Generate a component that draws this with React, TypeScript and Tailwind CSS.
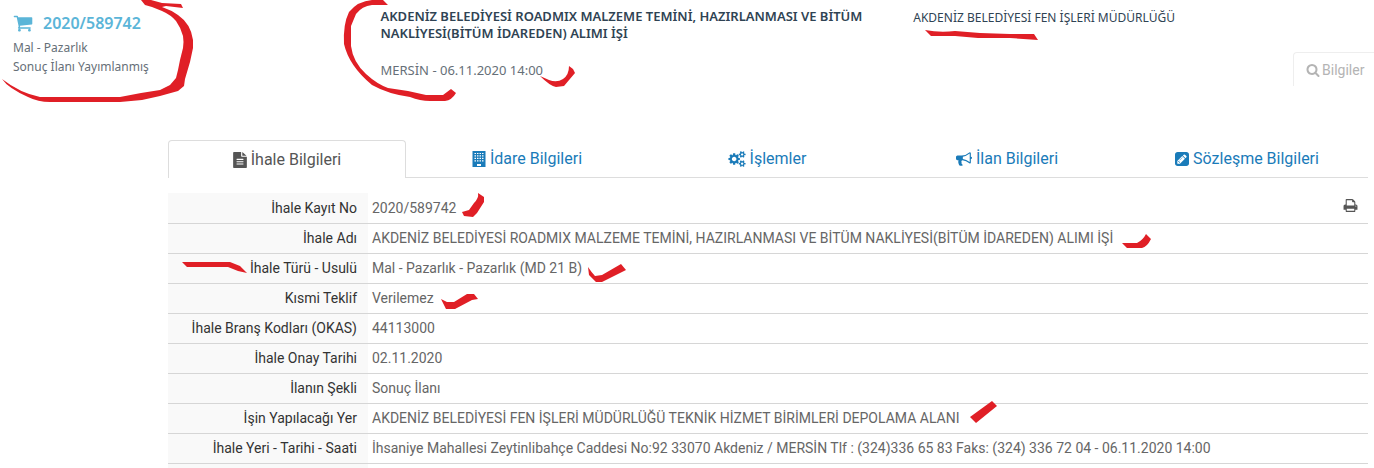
import React from "react";

interface IconProps {
    path: string;
    viewBox?: string;
    className?: string;
}

function Icon({ path, viewBox = "0 0 1792 1792", className = "" }: IconProps) {
    return (
        <svg viewBox={viewBox} fill="currentColor" fillRule="evenodd" aria-hidden="true" className={`shrink-0 ${className}`}>
            <path d={path} />
        </svg>
    );
}

const icons = {
    cart: "M704 1536q0 52-38 90t-90 38-90-38-38-90 38-90 90-38 90 38 38 90zm896 0q0 52-38 90t-90 38-90-38-38-90 38-90 90-38 90 38 38 90zm128-1088v512q0 24-16.5 42.5t-40.5 21.5l-1044 122q13 60 13 70 0 16-24 64h920q26 0 45 19t19 45-19 45-45 19h-1024q-26 0-45-19t-19-45q0-11 8-31.5t16-36 21.5-40 15.5-29.5l-177-823h-204q-26 0-45-19t-19-45 19-45 45-19h256q16 0 28.5 6.5t19.5 15.5 13 24.5 8 26 5.5 29.5 4.5 26h1201q26 0 45 19t19 45z",
    search: "M1216 832q0-185-131.5-316.5t-316.5-131.5-316.5 131.5-131.5 316.5 131.5 316.5 316.5 131.5 316.5-131.5 131.5-316.5zm512 832q0 52-38 90t-90 38q-54 0-90-38l-343-342q-179 124-399 124-143 0-273.5-55.5t-225-150-150-225-55.5-273.5 55.5-273.5 150-225 225-150 273.5-55.5 273.5 55.5 225 150 150 225 55.5 273.5q0 220-124 399l343 343q37 37 37 90z",
    file: "M1468 380q14 14 28 36h-472v-416q22 14 36 28zm-476 164h544v1152q0 40-28 68t-68 28h-1344q-40 0-68-28t-28-68v-1600q0-40 28-68t68-28h800v448q0 40 28 68t68 28zm160 832v-64q0-14-9-23t-23-9h-704q-14 0-23 9t-9 23v64q0 14 9 23t23 9h704q14 0 23-9t9-23zm0-256v-64q0-14-9-23t-23-9h-704q-14 0-23 9t-9 23v64q0 14 9 23t23 9h704q14 0 23-9t9-23zm0-256v-64q0-14-9-23t-23-9h-704q-14 0-23 9t-9 23v64q0 14 9 23t23 9h704q14 0 23-9t9-23z",
    building: "M0 0H13V16H0ZM2 2v1h1.5v-1zM4.5 2v1h1.5v-1zM7 2v1h1.5v-1zM9.5 2v1h1.5v-1zM2 4.3v1.3h1.5v-1.3zM4.5 4.3v1.3h1.5v-1.3zM7 4.3v1.3h1.5v-1.3zM9.5 4.3v1.3h1.5v-1.3zM2 6.8v1.3h1.5v-1.3zM4.5 6.8v1.3h1.5v-1.3zM7 6.8v1.3h1.5v-1.3zM9.5 6.8v1.3h1.5v-1.3zM2 9.3v1.3h1.5v-1.3zM4.5 9.3v1.3h1.5v-1.3zM7 9.3v1.3h1.5v-1.3zM9.5 9.3v1.3h1.5v-1.3zM4.5 13v2h4v-2z",
    cogs: "M896 896q0-106-75-181t-181-75-181 75-75 181 75 181 181 75 181-75 75-181zm768 512q0-52-38-90t-90-38-90 38-38 90q0 53 37.5 90.5t90.5 37.5 90.5-37.5 37.5-90.5zm0-1024q0-52-38-90t-90-38-90 38-38 90q0 53 37.5 90.5t90.5 37.5 90.5-37.5 37.5-90.5zm-384 421v185q0 10-7 19.5t-16 10.5l-155 24q-11 35-32 76 34 48 90 115 7 11 7 20 0 12-7 19-23 30-82.5 89.5t-78.5 59.5q-11 0-21-7l-115-90q-37 19-77 31-11 108-23 155-7 24-30 24h-186q-11 0-20-7.5t-10-17.5l-23-153q-34-10-75-31l-118 89q-7 7-20 7-11 0-21-8-144-133-144-160 0-9 7-19 10-14 41-53t47-61q-23-44-35-82l-152-24q-10-1-17-9.5t-7-19.5v-185q0-10 7-19.5t16-10.5l155-24q11-35 32-76-34-48-90-115-7-11-7-20 0-12 7-20 22-30 82-89t79-59q11 0 21 7l115 90q34-18 77-32 11-108 23-154 7-24 30-24h186q11 0 20 7.5t10 17.5l23 153q34 10 75 31l118-89q8-7 20-7 11 0 21 8 144 133 144 160 0 8-7 19-12 16-42 54t-45 60q23 48 34 82l152 23q10 2 17 10.5t7 19.5zm640 533v140q0 16-149 31-12 27-30 52 51 113 51 138 0 4-4 7-122 71-124 71-8 0-46-47t-52-68q-20 2-30 2t-30-2q-14 21-52 68t-46 47q-2 0-124-71-4-3-4-7 0-25 51-138-18-25-30-52-149-15-149-31v-140q0-16 149-31 13-29 30-52-51-113-51-138 0-4 4-7 4-2 35-20t59-34 30-16q8 0 46 46.5t52 67.5q20-2 30-2t30 2q51-71 92-112l6-2q4 0 124 70 4 3 4 7 0 25-51 138 17 23 30 52 149 15 149 31zm0-1024v140q0 16-149 31-12 27-30 52 51 113 51 138 0 4-4 7-122 71-124 71-8 0-46-47t-52-68q-20 2-30 2t-30-2q-14 21-52 68t-46 47q-2 0-124-71-4-3-4-7 0-25 51-138-18-25-30-52-149-15-149-31v-140q0-16 149-31 13-29 30-52-51-113-51-138 0-4 4-7 4-2 35-20t59-34 30-16q8 0 46 46.5t52 67.5q20-2 30-2t30 2q51-71 92-112l6-2q4 0 124 70 4 3 4 7 0 25-51 138 17 23 30 52 149 15 149 31z",
    bullhorn: "M1664 640q53 0 90.5 37.5t37.5 90.5-37.5 90.5-90.5 37.5v384q0 52-38 90t-90 38q-417-347-812-380-58 19-91 66t-31 100.5 40 92.5q-20 33-23 65.5t6 58 33.5 55 48 50 61.5 50.5q-29 58-111.5 83t-168.5 11.5-132-55.5q-7-23-29.5-87.5t-32-94.5-23-89-15-101 3.5-98.5 22-110.5h-122q-66 0-113-47t-47-113v-192q0-66 47-113t113-47h480q435 0 896-384 52 0 90 38t38 90v384zm-128 604v-954q-394 302-768 343v270q377 42 768 341z",
    pencil: "M532 1108l152 152-52 52h-56v-96h-96v-56l52-52zm414-390q14 13-3 30l-291 291q-17 17-30 3-14-13 3-30l291-291q17-17 30-3zm-274 690l544-544-288-288-544 544v288h288zm608-608l92-92q28-28 28-68t-28-68l-152-152q-28-28-68-28t-68 28l-92 92zm384-384v960q0 119-84.5 203.5t-203.5 84.5h-960q-119 0-203.5-84.5t-84.5-203.5v-960q0-119 84.5-203.5t203.5-84.5h960q119 0 203.5 84.5t84.5 203.5z",
    print: "M448 1536h896v-256h-896v256zm0-640h896v-384h-160q-40 0-68-28t-28-68v-160h-640v640zm1152 64q0-26-19-45t-45-19-45 19-19 45 19 45 45 19 45-19 19-45zm128 0v416q0 13-9.5 22.5t-22.5 9.5h-224v160q0 40-28 68t-68 28h-960q-40 0-68-28t-28-68v-160h-224q-13 0-22.5-9.5t-9.5-22.5v-416q0-79 56.5-135.5t135.5-56.5h64v-544q0-40 28-68t68-28h672q40 0 88 20t76 48l152 152q28 28 48 76t20 88v256h64q79 0 135.5 56.5t56.5 135.5z",
};

const tabs = [
    { label: "İhale Bilgileri", icon: <Icon path={icons.file} viewBox="0 0 1536 1792" className="h-4 w-3.5" /> },
    { label: "İdare Bilgileri", icon: <Icon path={icons.building} viewBox="0 0 13 16" className="h-4 w-3.5" /> },
    { label: "İşlemler", icon: <Icon path={icons.cogs} viewBox="0 0 1920 1792" className="h-4 w-[18px]" /> },
    { label: "İlan Bilgileri", icon: <Icon path={icons.bullhorn} className="size-4" /> },
    { label: "Sözleşme Bilgileri", icon: <Icon path={icons.pencil} viewBox="128 128 1536 1536" className="size-3.5" /> },
];

const rows = [
    ["İhale Kayıt No", "2020/589742"],
    ["İhale Adı", "AKDENİZ BELEDİYESİ ROADMIX MALZEME TEMİNİ, HAZIRLANMASI VE BİTÜM NAKLİYESİ(BİTÜM İDAREDEN) ALIMI İŞİ"],
    ["İhale Türü - Usulü", "Mal - Pazarlık - Pazarlık (MD 21 B)"],
    ["Kısmi Teklif", "Verilemez"],
    ["İhale Branş Kodları (OKAS)", "44113000"],
    ["İhale Onay Tarihi", "02.11.2020"],
    ["İlanın Şekli", "Sonuç İlanı"],
    ["İşin Yapılacağı Yer", "AKDENİZ BELEDİYESİ FEN İŞLERİ MÜDÜRLÜĞÜ TEKNİK HİZMET BİRİMLERİ DEPOLAMA ALANI"],
    ["İhale Yeri - Tarihi - Saati", "İhsaniye Mahallesi Zeytinlibahçe Caddesi No:92 33070 Akdeniz / MERSİN Tlf : (324)336 65 83 Faks: (324) 336 72 04 - 06.11.2020 14:00"],
];

// Red pen strokes drawn over the page
const marks = [
    "M141 0L145 5L152 7L162 11Q171 15 176 21Q181 28 183 36Q184 42 183 48L180 60L178 70L176 78L170 85L160 90L141 93L120 97H40Q20 93 2 79Q8 88 28 97Q38 102 50 102H120L142 100L160 96L178 91L184 86L185 79L190 62L193 48V40Q191 24 178 15Q171 10 162 7L166 6L183 8L181 4L162 3L151 0Z",
    "M388 5L383 0H372Q358 1 349 12Q343 24 344 44Q349 66 372 85Q388 94 410 97Q420 101 430 101H445Q452 100 456 93L451 89L443 95H426L408 91L388 88Q377 84 366 74Q353 62 351 46V26L356 14Q362 6 372 5Z",
    "M540 76Q550 86 556 87L564 86L575 73L573 69L569 66Q569 75 563 79Q557 83 549 80Z",
    "M925 30Q940 33 955 31L980 33L1010 34H1034L1038 40L1010 38H978L955 36H931Z",
    "M478 193L484 197V202L477 213L473 217L464 216L462 212L469 210L474 203Q479 198 478 193Z",
    "M1122 243H1137Q1143 240 1146 234L1151 239Q1147 247 1142 248H1127Z",
    "M182 262H230L240 266L247 273L238 271L228 267H187Z",
    "M588 267Q592 273 595 276L602 275L621 264L626 270L602 282H596L589 275Z",
    "M441 299L447 302L454 302L467 294H474L478 299L472 300L455 309H446Z",
    "M970 417L992 401L997 406L976 423Z",
];

function Header() {
    return (
        <header className="grid h-[140px] grid-cols-[27%_39%_1fr] pl-[13px] pt-2 font-['Noto_Sans','Open_Sans',sans-serif] text-[#2f4353]">
            <div className="text-xs leading-[19px] text-[#666f78]">
                <div className="flex h-[30px] items-center gap-2.5 text-[#5bb5d8]">
                    <Icon path={icons.cart} className="size-5" />
                    <a href="#ihale" className="text-base font-semibold">2020/589742</a>
                </div>
                <p>Mal - Pazarlık</p>
                <p>Sonuç İlanı Yayımlanmış</p>
            </div>
            <div>
                <h1 className="max-w-[500px] text-[13px] font-semibold leading-[17px]">
                    AKDENİZ BELEDİYESİ ROADMIX MALZEME TEMİNİ, HAZIRLANMASI VE BİTÜM NAKLİYESİ(BİTÜM İDAREDEN) ALIMI İŞİ
                </h1>
                <p className="mt-5 text-[13px] leading-[17px] text-[#666f78]">MERSİN - 06.11.2020 14:00</p>
            </div>
            <div className="flex flex-col">
                <p className="pl-0.5 text-xs leading-5">AKDENİZ BELEDİYESİ FEN İŞLERİ MÜDÜRLÜĞÜ</p>
                <button
                    type="button"
                    className="mt-6 flex h-[34px] w-[81px] items-center gap-0.5 self-end whitespace-nowrap rounded-tl border-l border-t border-[#eeeeee] pl-3 font-[Roboto,sans-serif] text-sm text-[#b4b4b4]"
                >
                    <Icon path={icons.search} className="size-3.5" />
                    Bilgiler
                </button>
            </div>
        </header>
    );
}

export default function App() {
    return (
        <div className="relative bg-white font-[Roboto,sans-serif] text-[#666666]">
            <Header />
            <main className="ml-[168px] mr-1.5">
                <div role="tablist" className="grid h-[38px] grid-cols-5 border-b border-[#dddddd]">
                    {tabs.map((tab, i) => (
                        <button
                            key={tab.label}
                            type="button"
                            role="tab"
                            aria-selected={i === 0}
                            className={`mr-0.5 flex items-center justify-center gap-1 text-base ${
                                i === 0
                                    ? "-mb-px rounded-t border border-b-0 border-[#dddddd] bg-white text-[#555555]"
                                    : "text-[#1a7bb9]"
                            }`}
                        >
                            {tab.icon}
                            {tab.label}
                        </button>
                    ))}
                </div>
                <table className="mt-[15px] w-full table-fixed border-collapse text-sm">
                    <tbody>
                        {rows.map(([label, value], i) => (
                            <tr key={label} className="h-[30px] border-b border-[#d6d6d6]">
                                <th scope="row" className="w-[200px] bg-[#f9f9f9] pr-[11px] text-right font-normal text-[#333333]">
                                    {label}
                                </th>
                                <td className="pl-1 pr-2.5">
                                    <div className="flex items-center justify-between">
                                        {value}
                                        {i === 0 && (
                                            <button type="button" aria-label="Yazdır" className="pb-1 text-[#555555]">
                                                <Icon path={icons.print} className="size-[15px]" />
                                            </button>
                                        )}
                                    </div>
                                </td>
                            </tr>
                        ))}
                    </tbody>
                </table>
                <div className="h-[5px] w-[200px] bg-[#f9f9f9]" />
            </main>
            <svg viewBox="0 0 1374 468" aria-hidden="true" className="pointer-events-none absolute left-0 top-0 h-[468px] w-[1374px] text-[#e01f26]">
                {marks.map((d) => (
                    <path key={d} d={d} fill="currentColor" />
                ))}
            </svg>
        </div>
    );
}
